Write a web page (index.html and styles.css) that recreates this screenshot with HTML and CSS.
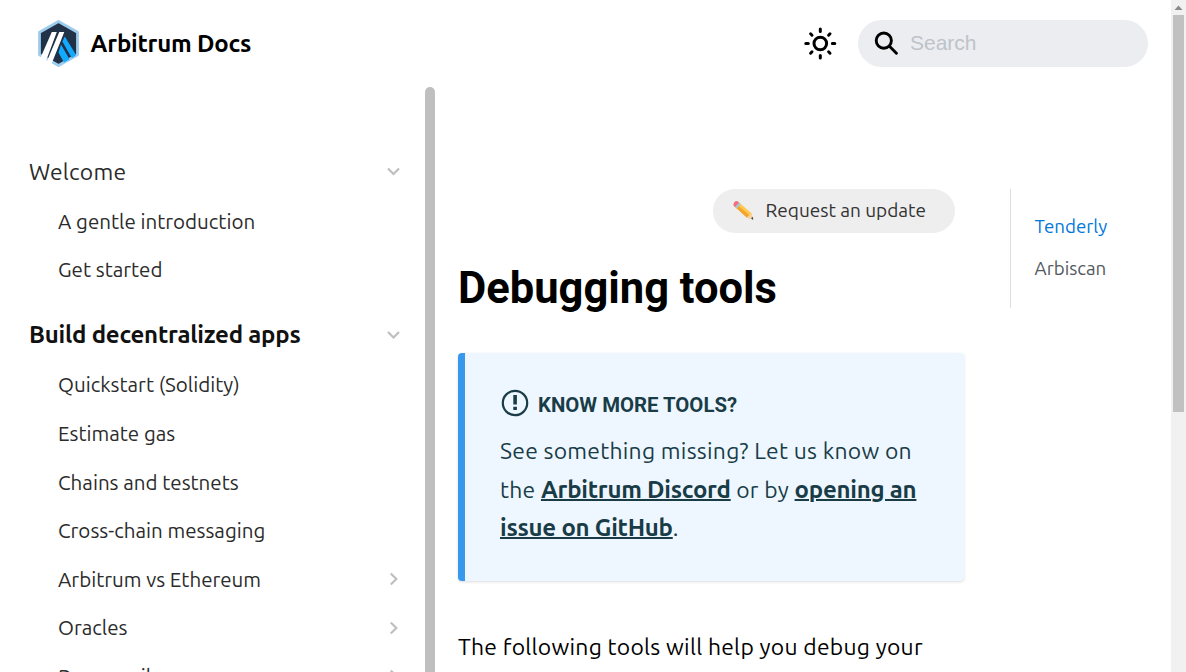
FILE: index.html
```html
<!DOCTYPE html>
<html lang="en">
<head>
<meta charset="utf-8">
<title>Debugging tools | Arbitrum Docs</title>
<link rel="stylesheet" href="styles.css">
</head>
<body>
<div class="window">
  <div class="page">
    <header class="navbar">
      <a class="brand">
        <svg class="logo" width="42" height="48" viewBox="0 0 42 48">
          <path d="M21.500 1.500 40.500 12.200V34.800L21.500 45.500 2.500 34.800V12.200Z" fill="#213147" stroke="#9dcced" stroke-width="2.800" stroke-linejoin="round"/>
          <path d="M27.800 16.500 38.500 34V35.800L34.800 38 25.300 21.500ZM24 24.500 32.500 39.300 27 42.500 21.500 32.500Z" fill="#12aaff"/>
          <path d="M14.800 12H19.800L9 41 3.500 37.800ZM22.300 12H27.300L14.500 44 9.800 41.500Z" fill="#fff"/>
        </svg>
        <span class="brand-name">Arbitrum Docs</span>
      </a>
      <div class="tools">
        <svg class="sun" width="34" height="34" viewBox="0 0 34 34" fill="none" stroke="#000" stroke-width="3" stroke-linecap="round">
          <circle cx="17.300" cy="16.500" r="6.300"/>
          <path d="M17.300 2V4.500M17.300 28.500V31M2.800 16.500H5.300M29.300 16.500H31.800M7.600 6.800 9 8.200M25.600 24.800 27 26.200M7.600 26.200 9 24.800M25.600 8.200 27 6.800"/>
        </svg>
        <div class="search">
          <svg width="24" height="24" viewBox="0 0 24 24" fill="none" stroke="#000" stroke-width="2.900" stroke-linecap="round">
            <circle cx="9.800" cy="9.600" r="7.600"/><path d="M15.500 15.300 22.400 22.200"/>
          </svg>
          <span>Search</span>
        </div>
      </div>
    </header>
    <div class="body">
      <nav class="sidebar">
        <div class="menu">
          <div class="row head"><span>Welcome</span><svg class="caret" viewBox="0 0 14 14"><path d="M1 3.500 6.500 9 12 3.500"/></svg></div>
          <div class="row"><span>A gentle introduction</span></div>
          <div class="row"><span>Get started</span></div>
          <div class="row head active"><span>Build decentralized apps</span><svg class="caret" viewBox="0 0 14 14"><path d="M1 4 6.500 9.500 12 4"/></svg></div>
          <div class="row"><span>Quickstart (Solidity)</span></div>
          <div class="row"><span>Estimate gas</span></div>
          <div class="row"><span>Chains and testnets</span></div>
          <div class="row"><span>Cross-chain messaging</span></div>
          <div class="row"><span>Arbitrum vs Ethereum</span><svg class="caret" viewBox="0 0 14 14"><path d="M3.800 1.500 9.300 7 3.800 12.500"/></svg></div>
          <div class="row"><span>Oracles</span><svg class="caret" viewBox="0 0 14 14"><path d="M3.800 1.500 9.300 7 3.800 12.500"/></svg></div>
          <div class="row"><span>Precompiles</span><svg class="caret" viewBox="0 0 14 14"><path d="M3.800 1.500 9.300 7 3.800 12.500"/></svg></div>
        </div>
        <div class="side-thumb"></div>
      </nav>
      <main class="article">
        <a class="request">
          <svg width="21" height="20" viewBox="0 0 21 20">
            <path d="M5 1.500 18.500 13.200 20 19.300 14 17.700 1 6Z" fill="#ffca4f"/>
            <path d="M3 3.700 16.500 15.300 14 17.700 1 6Z" fill="#f5a52c"/>
            <path d="M18.500 13.200 20 19.300 14 17.700Q14.500 16 16.300 15.500 16.800 13.500 18.500 13.200Z" fill="#f3d3a4"/>
            <path d="M18.600 18.900 19.400 17 20 19.300Z" fill="#39444b" stroke="#39444b" stroke-width=".5"/>
            <path d="M5.200 1.700 7.800 4 3.800 8.500 1.200 6.200Z" fill="#a9c5d3"/>
            <path d="M1.200 6.200Q-.4 4.500 1.300 2.200 3.400 0 5.200 1.700L6 2.400 2 6.900Z" fill="#f2707e"/>
          </svg>
          <span>Request an update</span>
        </a>
        <h1>Debugging tools</h1>
        <section class="note">
          <div class="note-title">
            <svg width="28" height="28" viewBox="0 0 28 28"><circle cx="14" cy="14" r="12.200" fill="none" stroke="#193c47" stroke-width="2.200"/><path d="M12.300 6H15.900V15.500H12.300ZM12.300 17.700H15.900V20.900H12.300Z" fill="#193c47"/></svg>
            <span>KNOW MORE TOOLS?</span>
          </div>
          <p>See something missing? Let us know on<br>the <a>Arbitrum Discord</a> or by <a>opening an</a><br><a>issue on GitHub</a>.</p>
        </section>
        <p class="intro">The following tools will help you debug your</p>
      </main>
      <aside class="toc">
        <a class="current">Tenderly</a>
        <a>Arbiscan</a>
      </aside>
    </div>
  </div>
  <div class="scrollbar">
    <svg width="15" height="15" viewBox="0 0 15 15"><path d="M3.500 10 7.500 5.500 11.500 10Z" fill="#8a8a8a"/></svg>
    <div class="thumb"></div>
  </div>
</div>
</body>
</html>
```
FILE: styles.css
```css
* { box-sizing: border-box; }
body {
  margin: 0;
  overflow: hidden;
  background: #fff;
  color: #000;
  font-family: Ubuntu, "Noto Sans", sans-serif;
}
p, h1 { margin: 0; }
svg { flex: none; }
.window { display: flex; width: 1186px; height: 672px; overflow: hidden; }
.page { width: 1171px; display: flex; flex-direction: column; }
.navbar {
  height: 87px;
  flex: none;
  padding: 0 23px 0 37px;
  display: flex;
  align-items: center;
  justify-content: space-between;
}
.brand { display: flex; align-items: center; gap: 11.6px; }
.brand-name { font-size: 24px; font-weight: 700; letter-spacing: -0.22px; white-space: nowrap; }
.tools { display: flex; align-items: center; gap: 21px; }
.search {
  width: 290px;
  height: 47px;
  border-radius: 24px;
  background: #ebedf0;
  display: flex;
  align-items: center;
  gap: 12px;
  padding: 0 0 2px 16px;
  color: #bec3c9;
  font: 21px "Liberation Sans", sans-serif;
}
.body { flex: 1; min-height: 0; display: flex; }
.sidebar { width: 435px; display: flex; overflow: hidden; }
.menu { width: 425px; padding: 59px 24px 0 58px; }
.row {
  height: 48.62px;
  display: flex;
  align-items: center;
  justify-content: space-between;
  font-size: 20.55px;
  color: #2b2b2b;
  white-space: nowrap;
}
.head { height: 51px; margin-left: -29px; font-size: 22.9px; letter-spacing: 0.2px; }
.active { height: 51.3px; margin-top: 15px; font-size: 24px; letter-spacing: -0.22px; font-weight: 700; color: #111; }
.caret { width: 14px; height: 14px; fill: none; stroke: #bfbfbf; stroke-width: 2.200; }
.side-thumb { width: 10px; border-radius: 5px 5px 0 0; background: #bfbfbf; }
.article { width: 507px; margin-left: 23px; padding-top: 102px; white-space: nowrap; }
.request {
  width: 242px;
  height: 44px;
  margin-left: 255px;
  padding: 0 0 2px 19.5px;
  border-radius: 22px;
  background: #eee;
  color: #333;
  display: flex;
  align-items: center;
  gap: 12px;
  font-size: 19px;
}
h1 { margin-top: 30px; font: 700 43.5px/52px Roboto, sans-serif; }
.note {
  width: 506.4px;
  height: 228px;
  margin-top: 38px;
  padding: 36px 0 0 35px;
  border-left: 7px solid #3798ec;
  border-radius: 4px;
  background: #eef7ff;
  box-shadow: 0 1px 3px rgba(0, 0, 0, .14);
  color: #193c47;
}
.note-title { height: 28px; display: flex; align-items: center; gap: 9px; margin-left: 1px; font: 700 20.35px Roboto, sans-serif; }
.note-title span { position: relative; top: 2px; }
.note p { margin-top: 15.4px; font-size: 22.9px; letter-spacing: 0.25px; line-height: 38.4px; }
.note p a { font-size: 24px; line-height: 1; letter-spacing: -0.25px; font-weight: 700; text-decoration: underline; text-decoration-thickness: 2px; }
.intro { margin-top: 47px; font-size: 22.9px; letter-spacing: 0.26px; line-height: 38.4px; }
.toc {
  width: 150px;
  height: 119px;
  margin: 102px 0 0 45px;
  padding: 17px 0 0 23.5px;
  border-left: 1px solid #dadde1;
  display: flex;
  flex-direction: column;
  font-size: 18.72px;
  line-height: 42px;
  color: #525860;
}
.current { color: #0077da; }
.scrollbar { width: 15px; background: #f1f1f1; display: flex; flex-direction: column; align-items: center; }
.thumb { width: 11px; height: 397px; background: #c1c1c1; }
```
